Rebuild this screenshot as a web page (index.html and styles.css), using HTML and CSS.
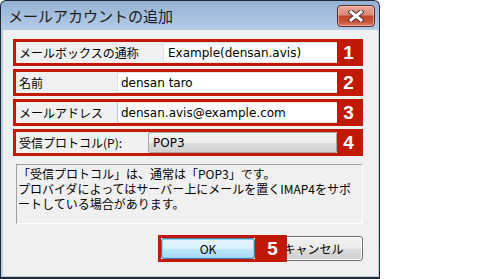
FILE: index.html
```html
<!DOCTYPE html>
<html lang="ja">
<head>
<meta charset="utf-8">
<title>メールアカウントの追加</title>
<link rel="stylesheet" href="styles.css">
</head>
<body>
<div class="window">
  <div class="titlebar">
    <span class="title">メールアカウントの追加</span>
    <button class="close" aria-label="閉じる">
      <svg width="16" height="12" viewBox="0 0 16 12">
        <path d="M3 2 L13 10 M13 2 L3 10" stroke="#4a2a2a" stroke-width="5" stroke-linecap="square" fill="none"/>
        <path d="M3 2 L13 10 M13 2 L3 10" stroke="#ffffff" stroke-width="3" stroke-linecap="square" fill="none"/>
      </svg>
    </button>
  </div>
  <div class="client">
    <div class="fields">
      <div class="row">
        <div class="label label-wide">メールボックスの通称</div>
        <div class="input">Example(densan.avis)</div>
        <div class="num">1</div>
      </div>
      <div class="row">
        <div class="label">名前</div>
        <div class="input">densan taro</div>
        <div class="num">2</div>
      </div>
      <div class="row">
        <div class="label">メールアドレス</div>
        <div class="input input-focus">densan.avis@example.com</div>
        <div class="num">3</div>
      </div>
      <div class="row">
        <div class="label label-mid">受信プロトコル(P):</div>
        <div class="combo">POP3</div>
        <div class="num">4</div>
      </div>
    </div>
    <div class="info">「受信プロトコル」は、通常は「POP3」です。<br>プロバイダによってはサーバー上にメールを置くIMAP4をサポ<br>ートしている場合があります。</div>
    <div class="buttons">
      <div class="ok-wrap">
        <button class="btn btn-ok">OK</button>
        <div class="badge">5</div>
      </div>
      <button class="btn btn-cancel">キャンセル</button>
    </div>
  </div>
</div>
</body>
</html>
```
FILE: styles.css
```css
body {
  margin: 0;
  background: #ffffff;
  font-family: "Noto Sans CJK JP", sans-serif;
  font-size: 12px;
  color: #000;
}

.window {
  width: 380px;
  height: 279px;
  box-sizing: border-box;
  border: 1px solid #1f2a36;
  border-bottom-width: 2px;
  border-radius: 6px 6px 0 0;
  background: linear-gradient(#95b2d4 0, #b4cbe6 29px, #b9d1ea 100%);
  display: flex;
  flex-direction: column;
}

.titlebar {
  height: 29px;
  flex: none;
  display: flex;
  align-items: center;
  justify-content: space-between;
  padding: 0 4px 0 7px;
}

.title {
  font-size: 15px;
  color: #1b1b1b;
  line-height: 1;
  margin-top: -1px;
}

.close {
  width: 38px;
  height: 22px;
  margin: 0;
  padding: 0;
  border: 1px solid #5b2a24;
  border-radius: 4px;
  background: linear-gradient(#eaa99b 0, #d98a78 45%, #c2462c 50%, #c9553c 80%, #d9846e 100%);
  box-shadow: inset 0 0 0 1px rgba(255, 210, 200, 0.55);
  display: flex;
  align-items: center;
  justify-content: center;
}

.client {
  flex: 1;
  margin: 0 1px 1px 2px;
  background: #f0f0f0;
  padding: 9px 15px 0 10px;
  display: flex;
  flex-direction: column;
}

.fields {
  display: flex;
  flex-direction: column;
  gap: 3px;
}

.row {
  height: 27px;
  box-sizing: border-box;
  border: 3px solid #c01a04;
  display: flex;
  align-items: stretch;
  background: #f0f0f0;
}

.label {
  width: 101px;
  flex: none;
  padding-left: 3px;
  box-sizing: border-box;
  display: flex;
  align-items: center;
  white-space: nowrap;
}

.label-wide {
  width: 147px;
}

.label-mid {
  width: 132px;
}

.input {
  flex: 1;
  background: #ffffff;
  border: 1px solid #e3e3e3;
  border-right: none;
  display: flex;
  align-items: center;
  padding-left: 3px;
  font-family: "DejaVu Sans", "Noto Sans CJK JP", sans-serif;
  font-size: 12px;
  white-space: nowrap;
}

.row:first-child .input {
  padding-left: 4px;
}

.input-focus {
  border-left-color: #a9c8e8;
}

.combo {
  flex: 1;
  border: 1px solid #a8a8a8;
  border-radius: 2px;
  background: linear-gradient(#f4f4f4 0, #ececec 50%, #dcdcdc 51%, #d2d2d2 100%);
  display: flex;
  align-items: center;
  padding-left: 4px;
  font-family: "DejaVu Sans", "Noto Sans CJK JP", sans-serif;
}

.num {
  width: 23px;
  flex: none;
  background: #c01a04;
  color: #ffffff;
  font-family: "Liberation Sans", Arial, sans-serif;
  font-weight: bold;
  font-size: 19px;
  display: flex;
  align-items: center;
  justify-content: center;
}

.info {
  margin: 8px 0 0 3px;
  height: 60px;
  box-sizing: border-box;
  border-top: 1px solid #a0a0a0;
  border-left: 1px solid #a0a0a0;
  border-right: 1px solid #ffffff;
  border-bottom: 1px solid #ffffff;
  padding: 1px 0 0 1px;
  line-height: 15px;
  white-space: nowrap;
}

.buttons {
  margin-top: 11px;
  display: flex;
  justify-content: flex-end;
  align-items: center;
}

.ok-wrap {
  position: relative;
  border: 3px solid #c01a04;
  display: flex;
}

.btn {
  font-family: "Noto Sans CJK JP", sans-serif;
  font-size: 12px;
  color: #000;
  margin: 0;
  padding: 0;
  border-radius: 3px;
}

.btn-ok {
  width: 94px;
  height: 21px;
  border: 1px solid #3c7fb1;
  background: linear-gradient(#eaf6fd 0, #d9f0fc 50%, #bee6fd 51%, #a7d9f5 100%);
  box-shadow: inset 0 0 0 1px #8fd6f5;
}

.btn-cancel {
  width: 99px;
  height: 25px;
  margin-left: 6px;
  border: 1px solid #707070;
  background: linear-gradient(#f2f2f2 0, #ebebeb 50%, #dddddd 51%, #cfcfcf 100%);
  box-shadow: inset 0 0 0 1px #fcfcfc;
}

.badge {
  position: absolute;
  left: calc(100% + 3px);
  top: -3px;
  width: 29px;
  height: 27px;
  background: #c01a04;
  color: #ffffff;
  font-family: "Liberation Sans", Arial, sans-serif;
  font-weight: bold;
  font-size: 19px;
  display: flex;
  align-items: center;
  justify-content: center;
  z-index: 1;
}
```
